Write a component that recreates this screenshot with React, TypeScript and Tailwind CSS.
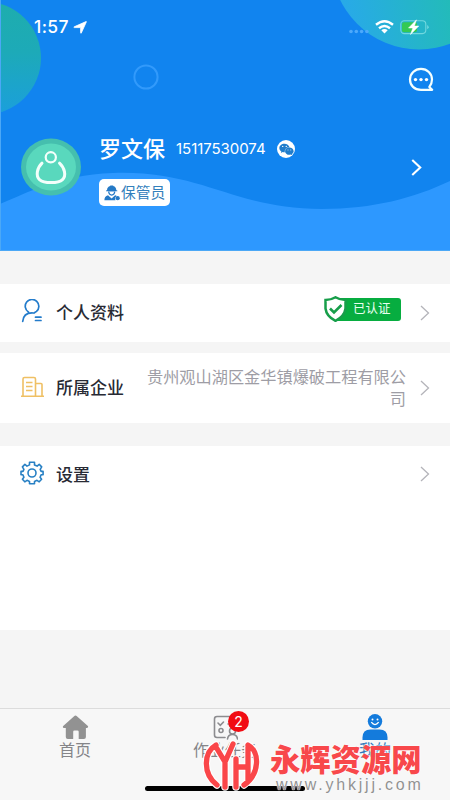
import { FaWeixin } from "react-icons/fa";

const cjk = "font-['Inter','Noto_Sans_CJK_SC',sans-serif]";

function Chevron({ className }: { className: string }) {
  return (
    <svg className={className} viewBox="0 0 10 16" fill="none" stroke="currentColor">
      <path d="M1 1l7.5 7L1 15" />
    </svg>
  );
}

function StatusBar() {
  return (
    <div className="flex h-[54px] items-center pr-[21px] pl-[34px] text-white">
      <span className="w-[37px] text-[17.5px] leading-none font-medium tracking-[0.4px]">1:57</span>
      <svg className="ml-[2px] h-[13px] w-[14px]" viewBox="0 0 14 13" fill="#fff" stroke="#fff" strokeWidth=".8">
        <path d="M13 .6Q13.6.4 13.3 1L8.3 12Q7.8 12.7 7.6 11.8V6.6H1.4Q.4 6.3 1.2 5.8z" />
      </svg>
      <svg className="mt-[8px] ml-auto h-[5px] w-[20px]" viewBox="0 0 20 5" fill="#4da9fb">
        <circle cx="2" cy="2.5" r="1.8" />
        <circle cx="7.3" cy="2.5" r="1.8" />
        <circle cx="12.6" cy="2.5" r="1.8" />
        <circle cx="17.9" cy="2.5" r="1.8" />
      </svg>
      <svg className="ml-[6px] h-[14px] w-[19px]" viewBox="0 0 19 14" fill="none" stroke="#fff" strokeWidth="2.4">
        <path d="M1 4.8Q9.5-2.2 18 4.8M4 8.2Q9.5 3.7 15 8.2" />
        <path d="M6.3 10.2Q9.5 7.7 12.7 10.2L9.5 13.5z" fill="#fff" stroke="none" />
      </svg>
      <svg className="ml-[6px] h-[16px] w-[29px]" viewBox="0 0 29 16">
        <rect x=".8" y="1.8" width="25" height="12.8" rx="3.5" fill="none" stroke="#72d8df" strokeWidth="1.1" />
        <path d="M27.2 6v4.3q3-2.1 0-4.3z" fill="#72d8df" />
        <rect x="2" y="3.2" width="15" height="10" rx="2" fill="#34c954" />
        <path d="M16.5.8L8.5 9h4.3l-2.3 6.5L18.8 7h-4.4z" fill="#fff" stroke="#fff" strokeWidth=".5" />
      </svg>
    </div>
  );
}

function Avatar() {
  return (
    <svg className="mt-[3px] h-[58px] w-[60px] shrink-0" viewBox="0 0 60 58" fill="none">
      <ellipse cx="30" cy="29" rx="30" ry="28.5" fill="#45bfae" />
      <ellipse cx="30" cy="29" rx="25" ry="23.5" fill="#59d8bd" />
      <circle cx="29.8" cy="19.3" r="5.1" stroke="#f2fffb" strokeWidth="2.2" />
      <path d="M21 25.2C16 30 14.5 38 18.5 41.6c4.4 4 18.8 4 23 0 4.2-4 2-11.8-3-16.4" stroke="#f2fffb" strokeWidth="3" strokeLinecap="round" />
    </svg>
  );
}

function WorkerIcon() {
  return (
    <svg className="h-[16px] w-[16px]" viewBox="0 0 16 16" fill="#2479c6">
      <path d="M3 5.2Q3.2 1.7 6.2 1V.4h3V1q3 .8 3.1 4.2l1 .2v.9H2v-.9z" />
      <path d="M4 6.5q.4 4 3.7 4.2 3.3-.2 3.7-4.2M.4 15.2q-.1-3.9 3.6-4.9l3.6 3.1 3.5-3.1q1 .3 1.6.8-2.5 1.8-1.2 4.1z" />
      <path d="M5.2 6.8h5q-.5 2.6-2.5 2.7-2-.1-2.5-2.7z" fill="#fff" />
      <circle cx="13.7" cy="13.2" r="2.1" />
    </svg>
  );
}

function Header() {
  return (
    <header className="relative h-[251px] overflow-hidden bg-[#1184ef]">
      <svg className="absolute inset-0 h-[251px] w-[450px]" viewBox="0 0 450 251">
        <defs>
          <linearGradient id="leftOrb" x1="0" y1="0" x2="0" y2="1">
            <stop offset="0" stopColor="#1eadad" />
            <stop offset=".45" stopColor="#1daab8" />
            <stop offset="1" stopColor="#1b9fdc" />
          </linearGradient>
          <linearGradient id="rightOrb" gradientUnits="userSpaceOnUse" x1="350" y1="25" x2="450" y2="0">
            <stop offset="0" stopColor="#28aae7" />
            <stop offset="1" stopColor="#23bbb9" />
          </linearGradient>
        </defs>
        <path d="M0 204C28 193 57 175 113 173C203 170 232 209 322 209C373 209 414 198 450 181V251H0z" fill="#2d98ff" />
        <circle cx="-15.5" cy="58" r="56.5" fill="url(#leftOrb)" />
        <circle cx="419" cy="-38" r="87.5" fill="url(#rightOrb)" />
        <circle cx="146" cy="77" r="11.6" fill="none" stroke="#329afb" strokeWidth="2" />
        <path d="M.5 0V251M0 250.5H450" stroke="#4ba8f6" fill="none" />
      </svg>
      <div className="relative flex h-full flex-col">
        <StatusBar />
        <div className="flex justify-end pt-[13px] pr-[16px]">
          <svg className="h-[25px] w-[26px]" viewBox="0 0 26 25" fill="none" stroke="#f4ffff" strokeWidth="2.2" strokeLinejoin="round">
            <path d="M24.2 22.8H13C6.3 22.8 2 18.4 2 12.5 2 6.5 6.8 1.9 13 1.9s11 4.6 11 10.6q0 4.3-2.7 7.5z" />
            <g fill="#fff" stroke="none">
              <circle cx="7.5" cy="12.6" r="1.7" />
              <circle cx="13" cy="12.6" r="1.7" />
              <circle cx="18.5" cy="12.6" r="1.7" />
            </g>
          </svg>
        </div>
        <div className="mt-[43px] flex items-start pl-[21px]">
          <Avatar />
          <div className="ml-[18px] flex-1">
            <div className="flex h-[28px] items-center text-white">
              <span className="text-[22px] leading-[28px] font-medium whitespace-nowrap">罗文保</span>
              <span className="ml-[11px] w-[90px] text-[15px] tracking-[-0.05px]">15117530074</span>
              <span className="ml-[11px] flex size-[18px] items-center justify-center rounded-full bg-white text-[#207dcc]">
                <FaWeixin size={15} />
              </span>
            </div>
            <div className="mt-[16px] flex h-[27px] w-[71px] items-center rounded-[5px] bg-white pl-[5px] text-[#3380bc]">
              <WorkerIcon />
              <span className="mt-[2px] ml-px text-[14.7px] leading-none whitespace-nowrap">保管员</span>
            </div>
          </div>
          <Chevron className="mt-[24px] mr-[28px] h-[17px] w-[11px] stroke-2 text-white" />
        </div>
      </div>
    </header>
  );
}

function Certified() {
  return (
    <div className="flex items-center">
      <svg className="z-10 -mr-[13px] h-[26px] w-[23px]" viewBox="0 0 23 26" fill="none">
        <path d="M11.5 1.3Q16 4 21.5 4V12.5Q20.5 20.5 11.5 24.8 2.5 20.5 1.5 12.5V4Q7 4 11.5 1.3z" fill="#fff" stroke="#179e4a" strokeWidth="2.5" />
        <path d="M6 12.5l4 4 7.5-7.5" stroke="#179e4a" strokeWidth="2.6" />
      </svg>
      <div className="flex h-[23px] w-[67px] items-center rounded-[3px] bg-[#07ad40] pt-px pl-[19px] text-[12.5px] text-[#e7fff0]">已认证</div>
    </div>
  );
}

const emblemPath =
  "M14 6C2 13 0 34 15 46M14 8L23 23L31 5M23 21V48M46 6C58 12 58 35 42 46M34 20V48M46 8V42M34 28H46";

function Watermark() {
  return (
    <div className="absolute top-[30px] left-[202px] flex h-[61px] w-[230px]">
      <svg className="h-[54px] w-[58px] shrink-0" viewBox="0 0 58 54" fill="none" strokeLinejoin="round" strokeLinecap="round">
        <path d={emblemPath} stroke="#fff" strokeWidth="7.5" />
        <path d={emblemPath} stroke="#fa4649" strokeWidth="5.3" />
      </svg>
      <div className="relative ml-[10px] w-[160px]">
        <div className="text-[30.3px] leading-[42px] font-black whitespace-nowrap text-[#f8484b] [text-shadow:0_0_2px_#fff,0_0_2px_#fff]">永辉资源网</div>
        <div className="absolute top-[38px] left-[6px] font-['Liberation_Sans',sans-serif] text-[16px] leading-[16px] tracking-[2.8px] whitespace-nowrap text-[#929292] [text-shadow:0_0_1px_#fff,0_0_1px_#fff]">www.yhkjjj.com</div>
      </div>
    </div>
  );
}

function TabBar() {
  return (
    <nav className="relative flex h-[92px] border-t border-[#dcdcdc] bg-[#f7f7f7] text-[16px] leading-[20px] text-[#858589]">
      <div className="flex w-[150px] flex-col items-center pt-[6px]">
        <svg className="h-[25px] w-[27px]" viewBox="0 0 27 25" fill="#929292">
          <path d="M12.1 1.2q1.4-1.3 2.8 0l11 9.8q.8 1.5-1 2h-1V22q0 2-2 2h-5.2v-7.2q0-1.3-1.3-1.3h-3q-1.2 0-1.2 1.3V24H5.8q-2 0-2-2v-9H2q-1.8-.5-.8-2z" />
        </svg>
        <span>首页</span>
      </div>
      <div className="relative flex w-[150px] flex-col items-center pt-[6px]">
        <svg className="h-[25px] w-[25px]" viewBox="0 0 25 25" fill="none" stroke="#8c8c8f" strokeWidth="1.6" strokeLinecap="round">
          <path d="M22.5 13V4q0-2.5-2.5-2.5H4Q1.5 1.5 1.5 4v16q0 2.5 2.5 2.5h8M5 8l2.3 2.3L10.5 7" />
          <circle cx="8" cy="15.5" r="2" />
          <circle cx="19.5" cy="16" r="3" />
          <path d="M14.5 24q.5-4.5 5-4.5t5 4.5M15 9h4" />
        </svg>
        <span>作业任务</span>
        <span className="absolute top-[2px] left-[78px] flex size-[21px] items-center justify-center rounded-full bg-[#f10c13] text-[14px] leading-none text-white">2</span>
      </div>
      <div className="flex w-[150px] flex-col items-center pt-[5px] text-[#2c79bd]">
        <svg className="h-[26px] w-[26px]" viewBox="0 0 26 26" fill="#147bdc">
          <circle cx="13" cy="7.3" r="7.2" />
          <path d="M.5 26v-2.5q0-8 8-8h9q8 0 8 8V26z" />
          <path d="M9.3 8.2q3.7 4.7 7.4 0" fill="none" stroke="#fff" strokeWidth="1.3" />
          <circle cx="10.5" cy="5.5" r="1" fill="#fff" />
          <circle cx="15.5" cy="5.5" r="1" fill="#fff" />
        </svg>
        <span>我的</span>
      </div>
      <div className="absolute top-[77px] left-[145px] h-[5px] w-[160px] rounded-full bg-black" />
      <Watermark />
    </nav>
  );
}

export default function App() {
  return (
    <main className={`flex h-[800px] w-[450px] flex-col overflow-hidden bg-[#f5f5f5] ${cjk}`}>
      <Header />
      <section className="mt-[33px] flex h-[58px] items-center bg-white pr-[20px] pl-[21px] text-[#282a34]">
        <svg className="mt-[-4px] h-[24px] w-[22px]" viewBox="0 0 22 24" fill="none" stroke="#247ccb" strokeWidth="1.7" strokeLinecap="round">
          <path d="M7.4 13A6.8 6.8 0 1 1 15.5 12.4L13 14M1.7 22.5Q2.5 13.5 12 14M14.5 18.2h5.5M14.5 21.5h5.5" />
        </svg>
        <span className="mt-[2px] ml-[13px] text-[17px] font-medium">个人资料</span>
        <div className="mt-[-8px] ml-auto">
          <Certified />
        </div>
        <Chevron className="ml-[19px] h-[16px] w-[10px] stroke-[1.3] text-[#b4b4ba]" />
      </section>
      <section className="mt-[11px] flex h-[70px] items-center bg-white pr-[20px] pl-[21px] text-[#282a34]">
        <svg className="mt-[-2px] h-[22px] w-[24px]" viewBox="0 0 24 22" fill="none" stroke="#efc064" strokeWidth="1.6">
          <path d="M2 20V3q0-1.5 1.5-1.5H13q1.5 0 1.5 1.5v17M0 20.2h23M14.5 7.5H20q1 0 1 1V20M5 6.5h6.5M5 10.5h6.5M5 14.5h6.5" />
        </svg>
        <span className="mt-[2px] ml-[11px] text-[17px] font-medium">所属企业</span>
        <span className="ml-auto w-[260px] text-right text-[16.2px] leading-[22px] text-[#9e9da5]">贵州观山湖区金华镇爆破工程有限公司</span>
        <Chevron className="ml-[14px] h-[16px] w-[10px] stroke-[1.3] text-[#b4b4ba]" />
      </section>
      <section className="mt-[23px] h-[184px] bg-white">
        <div className="flex h-[56px] items-center pr-[20px] pl-[20px] text-[#282a34]">
          <svg className="mt-[-2px] h-[24px] w-[24px]" viewBox="0 0 24 24" fill="none" stroke="#2880c4" strokeWidth="1.6" strokeLinejoin="round">
            <path d="M9.5 1.3h5v2.6l2.6 1.2L19.2 3.4l2.5 2.5-1.5 2.5.9 2h2v3.3h-2l-1 2.6 1.5 2-2.4 2.5-2.2-1.5-2.5 1.1v2.4h-5v-2.4L7 19.3l-2.2 1.5-2.4-2.5 1.5-2-1-2.6H1v-3.3h2l.9-2-1.5-2.5 2.5-2.5L7 5.1l2.5-1.2z" />
            <circle cx="12" cy="12" r="4" />
          </svg>
          <span className="mt-[3px] ml-[12px] text-[17px] font-medium">设置</span>
          <Chevron className="ml-auto h-[16px] w-[10px] stroke-[1.3] text-[#b4b4ba]" />
        </div>
      </section>
      <div className="h-[78px] shrink-0" />
      <TabBar />
    </main>
  );
}
